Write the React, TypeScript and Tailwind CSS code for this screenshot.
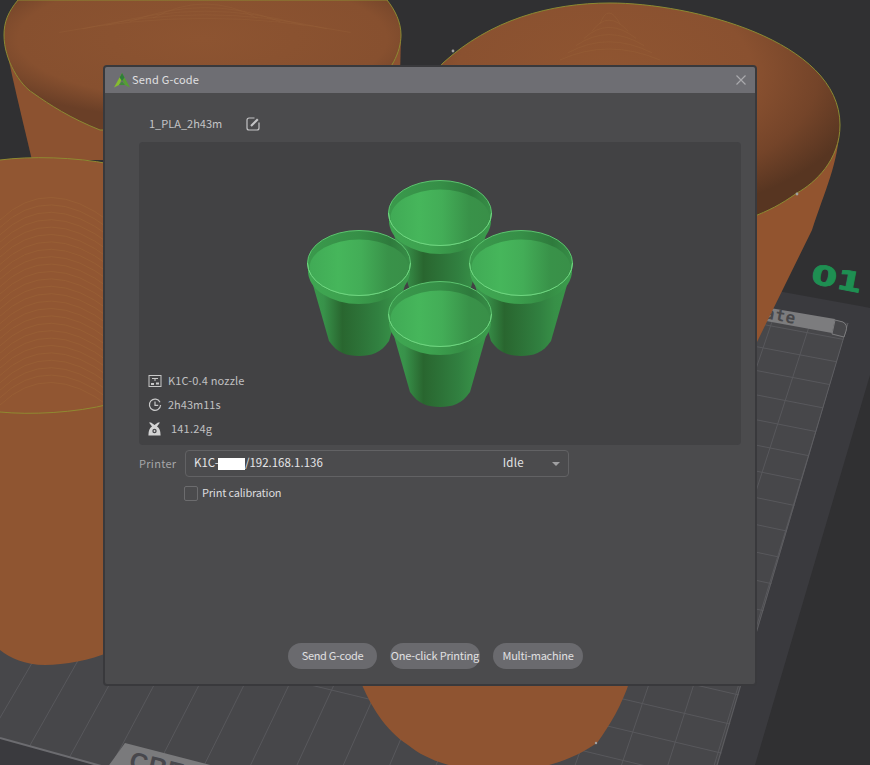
const vx = 1523;
const vy = -1891;
const longLines: number[][] = [];
for (let k = -5; k < 18; k++) {
  const x0 = 153 + 45 * k;
  const t = (800 + 1891) / (687 + 1891);
  longLines.push([vx, vy, vx + (x0 - vx) * t, 800]);
}
const crossLines: number[][] = [];
const addCross = (y: number) => {
  const y0 = (y - 0.0911 * 1245) / 1.0911;
  const s = (y0 + 1245) / 7683;
  crossLines.push([0, y0, 870, y0 + s * 870]);
};
for (let y = 717; y < 800; y += 31) addCross(y);
for (let y = 717; y > 250; ) {
  y -= 24 + ((y - 373) * 7) / 344;
  addCross(y);
}

const arcs: number[] = [];
for (let i = 0; i < 26; i++) arcs.push(196 + i * 7.4);

function Scene() {
  return (
    <svg width="870" height="765" viewBox="0 0 870 765" className="block">
      <defs>
        <clipPath id="gridClip">
          <polygon points="848,323 718,765 105,768 0,738 0,175" />
        </clipPath>
        <radialGradient id="bowlR" cx="0.42" cy="0.3" r="0.66">
          <stop offset="0" stopColor="#8f5531" />
          <stop offset="0.55" stopColor="#8a5130" />
          <stop offset="0.8" stopColor="#744429" />
          <stop offset="1" stopColor="#573521" />
        </radialGradient>
        <radialGradient id="bowlL" cx="0.5" cy="0.3" r="0.62">
          <stop offset="0" stopColor="#8d5431" />
          <stop offset="0.75" stopColor="#87502f" />
          <stop offset="1" stopColor="#6a3f27" />
        </radialGradient>
      </defs>
      <rect width="870" height="765" fill="#303032" />
      <polygon points="0,175 783,292 860,306 870,308 870,375 755,765 755,780 0,780" fill="#3a3a3e" />
      <polygon points="848,323 718,765 105,768 0,738 0,175" fill="#47474a" />
      <g clipPath="url(#gridClip)" stroke="#58585c" strokeWidth="1">
        {longLines.map((l, i) => (
          <line key={i} x1={l[0]} y1={l[1]} x2={l[2]} y2={l[3]} />
        ))}
        {crossLines.map((l, i) => (
          <line key={i} x1={l[0]} y1={l[1]} x2={l[2]} y2={l[3]} />
        ))}
      </g>
      <line x1="848" y1="323" x2="717" y2="765" stroke="#5e5e62" />
      <line x1="0" y1="738" x2="105" y2="767" stroke="#6c6c70" strokeWidth="2" />
      <polygon points="770,308 835,319 832,333 766,321" fill="#7c7c7e" />
      <path d="M835,320 L843,322 Q848,325 846,331 L844,337 L832,334 Z" fill="#47474a" stroke="#7c7c7e" />
      <text
        transform="translate(764,318) rotate(11)"
        fontFamily="'DejaVu Sans Mono', monospace"
        fontWeight="700"
        fontSize="16"
        fill="#47474a"
        letterSpacing="1"
      >
        ate
      </text>
      <text
        transform="translate(810,283) rotate(11) scale(1.42,1.04)"
        fontFamily="'DejaVu Sans', sans-serif"
        fontWeight="700"
        fontSize="26"
        fill="#1e8f52"
        stroke="#1e8f52"
        strokeWidth="0.8"
      >
        01
      </text>
      <polygon points="125,743 107,768 222,768" fill="#7a7a7c" />
      <text
        transform="translate(128,768) rotate(14)"
        fontFamily="'Liberation Sans', sans-serif"
        fontWeight="700"
        fontSize="25"
        fill="#47474c"
        letterSpacing="1"
      >
        CRE
      </text>

      {/* top-left print */}
      <path d="M5,40 C8,60 20,110 32,160 L398,160 L401,35 Z" fill="#8c5230" />
      <path
        d="M18,0 C8,12 4,22 4,35 C4,60 20,85 33,93 C50,105 70,118 100,130 L300,130 C360,110 401,70 401,35 C401,22 395,10 387,0 Z"
        fill="url(#bowlL)"
        stroke="#8b8a32"
        strokeWidth="1"
      />
      {[40, 58, 76, 94, 112].map((r) => (
        <path key={r} d={`M${205 - r * 1.3},${r * 0.2 + 10} Q205,${r * 0.2 - 18} ${205 + r * 1.3},${r * 0.2 + 10}`} fill="none" stroke="#97603a" strokeWidth="1" opacity="0.35" />
      ))}

      {/* top-right print */}
      <path d="M840,125 C838,165 825,190 812,230 L757,342 L500,342 L440,70 Z" fill="#92542f" />
      <path
        d="M435,72 L443,63 C490,20 550,3 610,3 C690,3 840,40 840,125 C840,160 815,183 797,193 C780,205 770,210 750,218 L500,230 Z"
        fill="url(#bowlR)"
        stroke="#8b8a32"
        strokeWidth="1"
      />
      {[0, 8, 16, 24, 32, 40].map((r) => (
        <path key={r} d={`M${560 + r},${60 - r * 0.9} Q${608},${38 - r * 0.9} ${660 - r},${60 - r * 0.9}`} fill="none" stroke="#9c6338" strokeWidth="1" opacity="0.35" />
      ))}
      <circle cx="453" cy="51" r="1.4" fill="#a0a0a0" />
      <circle cx="797" cy="194" r="1.4" fill="#a0a0a0" />

      {/* left print */}
      <path d="M0,412 L110,400 L110,652 C90,660 65,665 45,665 C25,665 10,658 0,650 Z" fill="#8f5531" />
      <path d="M0,160 C30,156 75,157 110,164 L110,404 C75,413 30,415 0,412 Z" fill="#915632" />
      {arcs.map((y) => (
        <path key={y} d={`M0,${y + 24} Q48,${y - 22} 110,${y + 26}`} fill="none" stroke="#a66f3c" strokeWidth="1" opacity="0.3" />
      ))}
      <path d="M0,160 C30,156 75,157 110,164" fill="none" stroke="#8f8a30" strokeWidth="1" />
      <path d="M0,412 C30,415 75,413 110,404" fill="none" stroke="#8f8a30" strokeWidth="1" />

      {/* front print */}
      <path d="M360,680 C370,705 385,730 408,745 C432,765 470,772 505,772 C545,770 575,758 597,743 C610,725 622,705 630,680 Z" fill="#8f5431" />
      <circle cx="596" cy="743" r="1.2" fill="#a0a0a0" />
    </svg>
  );
}

function Cup({ cx, cy, id }: { cx: number; cy: number; id: string }) {
  const ell = `M${cx - 51.5},${cy} a51.5,32.5 0 1,0 103,0 a51.5,32.5 0 1,0 -103,0 Z`;
  return (
    <g>
      <path
        d={`M${cx - 50},${cy + 8} L${cx - 30},${cy + 78} C${cx - 22},${cy + 90} ${cx - 12},${cy + 93} ${cx},${cy + 93} C${cx + 12},${cy + 93} ${cx + 22},${cy + 90} ${cx + 30},${cy + 78} L${cx + 50},${cy + 8} Z`}
        fill={`url(#body${id})`}
      />
      <ellipse cx={cx} cy={cy + 8} rx="51" ry="33" fill={`url(#lip${id})`} />
      <path d={ell} fill={`url(#band${id})`} stroke="#5cc36f" strokeWidth="1" />
      <clipPath id={`clip${id}`}>
        <path d={ell} />
      </clipPath>
      <ellipse cx={cx} cy={cy + 5} rx="49.5" ry="28.5" fill={`url(#inner${id})`} clipPath={`url(#clip${id})`} />
      <path d={`M${cx - 51.5},${cy} a51.5,32.5 0 0,0 103,0`} fill="none" stroke="#6fd680" strokeWidth="1" />
    </g>
  );
}

function CupDefs({ id, cx }: { id: string; cx: number }) {
  const x1 = cx - 52;
  const x2 = cx + 52;
  return (
    <defs>
      <linearGradient id={`body${id}`} gradientUnits="userSpaceOnUse" x1={x1} x2={x2} y1="0" y2="0">
        <stop offset="0" stopColor="#3c9d4e" />
        <stop offset="0.16" stopColor="#38924a" />
        <stop offset="0.34" stopColor="#29662f" />
        <stop offset="0.52" stopColor="#2d7338" />
        <stop offset="0.68" stopColor="#318040" />
        <stop offset="0.82" stopColor="#378f47" />
        <stop offset="1" stopColor="#3a984b" />
      </linearGradient>
      <linearGradient id={`lip${id}`} gradientUnits="userSpaceOnUse" x1={x1} x2={x2} y1="0" y2="0">
        <stop offset="0" stopColor="#3fa652" />
        <stop offset="0.4" stopColor="#3da24f" />
        <stop offset="0.75" stopColor="#358c44" />
        <stop offset="1" stopColor="#3c9f4e" />
      </linearGradient>
      <linearGradient id={`band${id}`} gradientUnits="userSpaceOnUse" x1={x1} x2={x2} y1="0" y2="0">
        <stop offset="0" stopColor="#3a9a4c" />
        <stop offset="0.5" stopColor="#368f47" />
        <stop offset="0.8" stopColor="#2e7a3c" />
        <stop offset="1" stopColor="#388f48" />
      </linearGradient>
      <linearGradient id={`inner${id}`} gradientUnits="userSpaceOnUse" x1={x1} x2={x2} y1="0" y2="0">
        <stop offset="0" stopColor="#40a955" />
        <stop offset="0.3" stopColor="#46b65b" />
        <stop offset="0.52" stopColor="#43ad57" />
        <stop offset="0.78" stopColor="#399249" />
        <stop offset="1" stopColor="#398f48" />
      </linearGradient>
    </defs>
  );
}

function Logo() {
  return (
    <svg width="16" height="15" viewBox="0 0 16 15" className="block">
      <polygon points="8,0 0,14.5 5,12 8,6" fill="#86bd2f" />
      <polygon points="8,0 16,14.5 11,12 8,6" fill="#569f33" />
      <polygon points="8,0 5.6,4.5 8,8 10.4,4.5" fill="#2f7d3a" />
      <polygon points="5,12 11,12 8,8.5" fill="#3f8b3a" />
    </svg>
  );
}

function EditIcon() {
  return (
    <svg width="14" height="14" viewBox="0 0 14 14" className="block" fill="none" stroke="#c4c4c6">
      <path d="M8.5 1 H3 A2 2 0 0 0 1 3 V11 A2 2 0 0 0 3 13 H11 A2 2 0 0 0 13 11 V5.5" strokeWidth="1.2" />
      <path d="M5 9 L11.8 2.2" strokeWidth="2.2" />
    </svg>
  );
}

function PlateIcon() {
  return (
    <svg width="14" height="14" viewBox="0 0 14 14" className="block" fill="none" stroke="#c8c8c8">
      <rect x="1" y="1.5" width="12" height="11" />
      <path d="M4 4.5 H10 M7 4.5 V7" />
      <path d="M3 10 H6 M8 9.5 H11" strokeWidth="2" />
    </svg>
  );
}

function ClockIcon() {
  return (
    <svg width="14" height="14" viewBox="0 0 14 14" className="block" fill="none" stroke="#c8c8c8" strokeWidth="1.2">
      <path d="M12 4.2 A5.6 5.6 0 1 0 12.6 7" />
      <path d="M7 3.6 V7.4 H10.2" />
    </svg>
  );
}

function ScaleIcon() {
  return (
    <svg width="13" height="14" viewBox="0 0 13 14" className="block">
      <path d="M1 0.5 L3 0.5 L6.5 3 L10 0.5 L12 0.5 L9 4.6 Q12.6 6.5 12.6 13.5 L0.4 13.5 Q0.4 6.5 4 4.6 Z" fill="#d4d4d4" />
      <circle cx="6.5" cy="9" r="2.2" fill="#47474a" />
      <circle cx="6.5" cy="9" r="0.9" fill="#d4d4d4" />
    </svg>
  );
}

export default function App() {
  return (
    <div
      className="relative h-[765px] w-[870px] overflow-hidden bg-[#303032] text-[11px]"
      style={{ fontFamily: "'Noto Sans CJK SC', 'Noto Sans', sans-serif" }}
    >
      <Scene />
      <div className="absolute left-[103px] top-[65px] flex h-[621px] w-[654px] flex-col overflow-hidden rounded-[4px] border-2 border-[#39393c] bg-[#4b4b4d]">
        <div className="flex h-[26px] shrink-0 items-center justify-between bg-[#6e6e73] pl-[9px] pr-[9px]">
          <div className="flex items-center gap-[2px]">
            <Logo />
            <span className="pb-[1px] tracking-[0.2px] text-[#e0e0e2]">Send G-code</span>
          </div>
          <svg width="10" height="10" viewBox="0 0 10 10" className="block" stroke="#a9a9ad" strokeWidth="1.2">
            <path d="M0.5 0.5 L9.5 9.5 M9.5 0.5 L0.5 9.5" />
          </svg>
        </div>
        <div className="flex flex-1 flex-col pl-[34px] pr-[14px]">
          <div className="flex h-[49px] shrink-0 items-center pl-[10px] pt-[13px] text-[#c4c4c6]">
            <span className="w-[97px] pb-[1px]">1_PLA_2h43m</span>
            <EditIcon />
          </div>
          <div className="relative h-[303px] shrink-0 rounded-[4px] bg-[#424244]">
            <svg width="602" height="303" viewBox="139 142 602 303" className="block">
              <CupDefs id="t" cx={440} />
              <CupDefs id="l" cx={359} />
              <CupDefs id="r" cx={521} />
              <CupDefs id="f" cx={440} />
              <Cup cx={440} cy={213} id="t" />
              <Cup cx={359} cy={263} id="l" />
              <Cup cx={521} cy={263} id="r" />
              <Cup cx={440} cy={314} id="f" />
            </svg>
            <div className="absolute bottom-[4px] left-[9px] flex flex-col text-[#c0c0c2]">
              <div className="flex h-6 items-center gap-[6px]">
                <PlateIcon />
                <span className="pb-[1px] tracking-[0.15px]">K1C-0.4 nozzle</span>
              </div>
              <div className="flex h-6 items-center gap-[6px]">
                <ClockIcon />
                <span className="pb-[1px]">2h43m11s</span>
              </div>
              <div className="flex h-6 items-center gap-[10px]">
                <ScaleIcon />
                <span className="pb-[1px] tracking-[0.2px]">141.24g</span>
              </div>
            </div>
          </div>
          <div className="mt-[5px] flex h-[27px] shrink-0 items-center">
            <span className="w-[46px] pb-[1px] tracking-[0.3px] text-[#a6a6a8]">Printer</span>
            <div className="flex h-[27px] w-[384px] items-center rounded-[4px] border border-[#626264] pl-[8px] pr-[8px] text-[11.5px] text-[#e4e4e6]">
              <span className="w-[24px] pb-[1px]">K1C-</span>
              <span className="h-[12px] w-[27px] bg-white"></span>
              <span className="w-[259px] pb-[1px]">/192.168.1.136</span>
              <span className="pb-[1px] tracking-[0.3px]">Idle</span>
              <svg width="8" height="4" viewBox="0 0 8 4" className="ml-[28px] block">
                <polygon points="0,0 8,0 4,4" fill="#a0a0a2" />
              </svg>
            </div>
          </div>
          <div className="mt-[9px] flex h-[15px] shrink-0 items-center pl-[45px]">
            <span className="h-[15px] w-[14px] rounded-[2px] border border-[#6c6c6e]"></span>
            <span className="ml-[4px] pb-[2px] tracking-[-0.2px] text-[#dcdcde]">Print calibration</span>
          </div>
          <div className="mt-[142px] flex justify-center gap-[13px] pr-[9px] text-[#e0e0e2]">
            <button className="h-[26px] w-[89px] rounded-full bg-[#6a6a6e] pb-[1px] tracking-[-0.3px]">Send G-code</button>
            <button className="h-[26px] w-[90px] whitespace-nowrap rounded-full bg-[#6a6a6e] pb-[1px] tracking-[-0.2px]">One-click Printing</button>
            <button className="h-[26px] w-[90px] rounded-full bg-[#6a6a6e] pb-[1px] tracking-[-0.25px]">Multi-machine</button>
          </div>
        </div>
      </div>
    </div>
  );
}
